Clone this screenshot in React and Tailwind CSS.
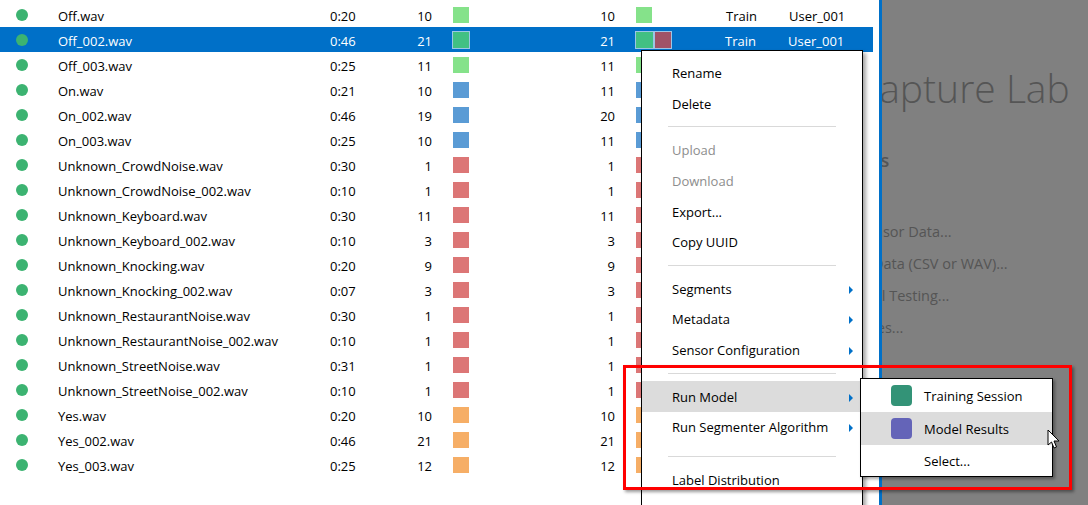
import React from 'react';

const GREEN = 'bg-[#85e28a]';
const BLUE = 'bg-[#5a9bd5]';
const RED = 'bg-[#dc7676]';
const ORANGE = 'bg-[#f6ae66]';

const files = [
  ['Off.wav', '0:20', 10, 10, GREEN],
  ['Off_002.wav', '0:46', 21, 21, GREEN],
  ['Off_003.wav', '0:25', 11, 11, GREEN],
  ['On.wav', '0:21', 10, 11, BLUE],
  ['On_002.wav', '0:46', 19, 20, BLUE],
  ['On_003.wav', '0:25', 10, 11, BLUE],
  ['Unknown_CrowdNoise.wav', '0:30', 1, 1, RED],
  ['Unknown_CrowdNoise_002.wav', '0:10', 1, 1, RED],
  ['Unknown_Keyboard.wav', '0:30', 11, 11, RED],
  ['Unknown_Keyboard_002.wav', '0:10', 3, 3, RED],
  ['Unknown_Knocking.wav', '0:20', 9, 9, RED],
  ['Unknown_Knocking_002.wav', '0:07', 3, 3, RED],
  ['Unknown_RestaurantNoise.wav', '0:30', 1, 1, RED],
  ['Unknown_RestaurantNoise_002.wav', '0:10', 1, 1, RED],
  ['Unknown_StreetNoise.wav', '0:31', 1, 1, RED],
  ['Unknown_StreetNoise_002.wav', '0:10', 1, 1, RED],
  ['Yes.wav', '0:20', 10, 10, ORANGE],
  ['Yes_002.wav', '0:46', 21, 21, ORANGE],
  ['Yes_003.wav', '0:25', 12, 12, ORANGE],
];

// h = row height, taken from the screenshot (rows aren't all the same)
const menu = [
  { label: 'Rename', h: 'h-[31px]' },
  { label: 'Delete', h: 'h-[31px]' },
  { sep: 'h-[15px] pt-[6px]' },
  { label: 'Upload', h: 'h-[31px]', disabled: true },
  { label: 'Download', h: 'h-[31px]', disabled: true },
  { label: 'Export...', h: 'h-[30px] pt-px' },
  { label: 'Copy UUID', h: 'h-[30px] pt-px' },
  { sep: 'h-[17px] pt-[8px]' },
  { label: 'Segments', h: 'h-[30px] pt-px', arrow: true },
  { label: 'Metadata', h: 'h-[31px]', arrow: true },
  { label: 'Sensor Configuration', h: 'h-[30px] pt-px', arrow: true },
  { sep: 'h-[16px] pt-[8px]' },
  { label: 'Run Model', h: 'h-[31px] pt-[2px]', arrow: true, active: true },
  { label: 'Run Segmenter Algorithm', h: 'h-[30px] pt-px', arrow: true },
  { sep: 'h-[23px] pt-[14px]' },
  { label: 'Label Distribution', h: 'h-[30px] pt-px' },
];

function FileRow({ file, selected }) {
  const [name, time, a, b, color] = file;
  return (
    <div className={`flex items-center h-[25px] ${selected ? 'bg-[#0070c8] text-white' : 'text-black'}`}>
      <div className="w-[12px] h-[12px] ml-[16px] rounded-full bg-[#3cb371]" />
      <div className="w-[272px] ml-[30px] pt-[4px]">{name}</div>
      <div className="w-[60px] pt-[4px]">{time}</div>
      <div className="w-[42px] pt-[4px] text-right">{a}</div>
      <div className="w-[21px]" />
      {selected ? (
        <div className="w-[18px] h-[18px] -mx-px border border-[#9cc6e6] bg-[#42c083]" />
      ) : (
        <div className={`w-[16px] h-[16px] ${color}`} />
      )}
      <div className="w-[146px] pt-[4px] text-right">{b}</div>
      <div className="w-[21px]" />
      {selected ? (
        <div className="flex w-[90px] -ml-px">
          <div className="w-[19px] h-[18px] border border-[#9cc6e6] bg-[#42c083]" />
          <div className="w-[18px] h-[18px] border border-[#9cc6e6] bg-[#a05367]" />
        </div>
      ) : (
        <div className="w-[90px]">
          <div className={`w-[16px] h-[16px] ${color}`} />
        </div>
      )}
      <div className="w-[63px] pt-[4px]">Train</div>
      <div className="pt-[4px]">User_001</div>
    </div>
  );
}

function ContextMenu() {
  return (
    <div className="absolute left-[641px] top-[50px] w-[222px] h-[470px] pt-[7px] bg-white border border-black shadow-[3px_3px_4px_rgba(0,0,0,0.35)] text-black">
      {menu.map((item, i) =>
        item.sep ? (
          <div key={i} className={`${item.sep} px-[26px]`}>
            <div className="h-px bg-[#d9d9d9]" />
          </div>
        ) : (
          <div
            key={i}
            className={`${item.h} flex items-center justify-between pl-[30px] pr-[9px] ${item.active ? 'bg-[#dcdcdc]' : ''} ${item.disabled ? 'text-[#8d8d8d]' : ''}`}
          >
            <span>{item.label}</span>
            {item.arrow && <span className="w-0 h-0 border-y-[4px] border-y-transparent border-l-[4px] border-l-[#0070c8]" />}
          </div>
        )
      )}
    </div>
  );
}

function SubMenu() {
  return (
    <div className="absolute left-[860px] top-[378px] w-[193px] h-[99px] bg-white border border-black shadow-[2px_2px_3px_rgba(0,0,0,0.35)] text-black">
      <div className="flex items-center h-[33px] pl-[30px]">
        <div className="w-[21px] h-[21px] rounded-[4px] bg-[#339377]" />
        <span className="ml-[12px] pt-[2px]">Training Session</span>
      </div>
      <div className="flex items-center h-[33px] pl-[30px] bg-[#dcdcdc]">
        <div className="w-[21px] h-[21px] rounded-[4px] bg-[#6464b8]" />
        <span className="ml-[12px] pt-[2px]">Model Results</span>
      </div>
      <div className="flex items-center h-[31px] pl-[63px] pt-[2px]">Select...</div>
    </div>
  );
}

function SidePanel() {
  return (
    <div className="flex-1 min-w-0 overflow-hidden bg-[#808080] text-[#555] whitespace-nowrap">
      <div className="text-[39px] font-light leading-[48px] mt-[64px] -ml-[27px]">Capture Lab</div>
      <div className="text-[18px] font-semibold leading-[22px] mt-[37px] -ml-[57px]">Actions</div>
      <div className="text-[14.5px] leading-[32px] mt-[45px]">
        <div className="-ml-[82px]">Capture Sensor Data...</div>
        <div className="-ml-[59px]">Import Data (CSV or WAV)...</div>
        <div className="-ml-[39px]">Model Testing...</div>
        <div className="-ml-[20px]">Files...</div>
      </div>
    </div>
  );
}

export default function App() {
  return (
    <div className="relative flex w-[1088px] h-[505px] overflow-hidden bg-white text-[13px] font-['Open_Sans','Noto_Sans',sans-serif]">
      <div className="w-[873px] pt-[2px]">
        {files.map((f, i) => (
          <FileRow key={f[0]} file={f} selected={i === 1} />
        ))}
      </div>
      <div className="w-[6px]" />
      <div className="w-[3px] bg-[#0070c8]" />
      <SidePanel />

      <ContextMenu />
      <SubMenu />

      {/* red highlight around the submenu */}
      <div className="absolute left-[623px] top-[365px] w-[449px] h-[125px] border-[3px] border-[#f00] shadow-[2px_2px_3px_rgba(0,0,0,0.4)]" />

      {/* mouse pointer */}
      <svg className="absolute left-[1047px] top-[429px]" width="14" height="22" viewBox="0 0 14 22">
        <path d="M1 1 L1 16 L4.5 13 L7 19 L9.5 18 L7 12 L12 12 Z" fill="#fff" stroke="#000" strokeWidth="1" />
      </svg>
    </div>
  );
}
